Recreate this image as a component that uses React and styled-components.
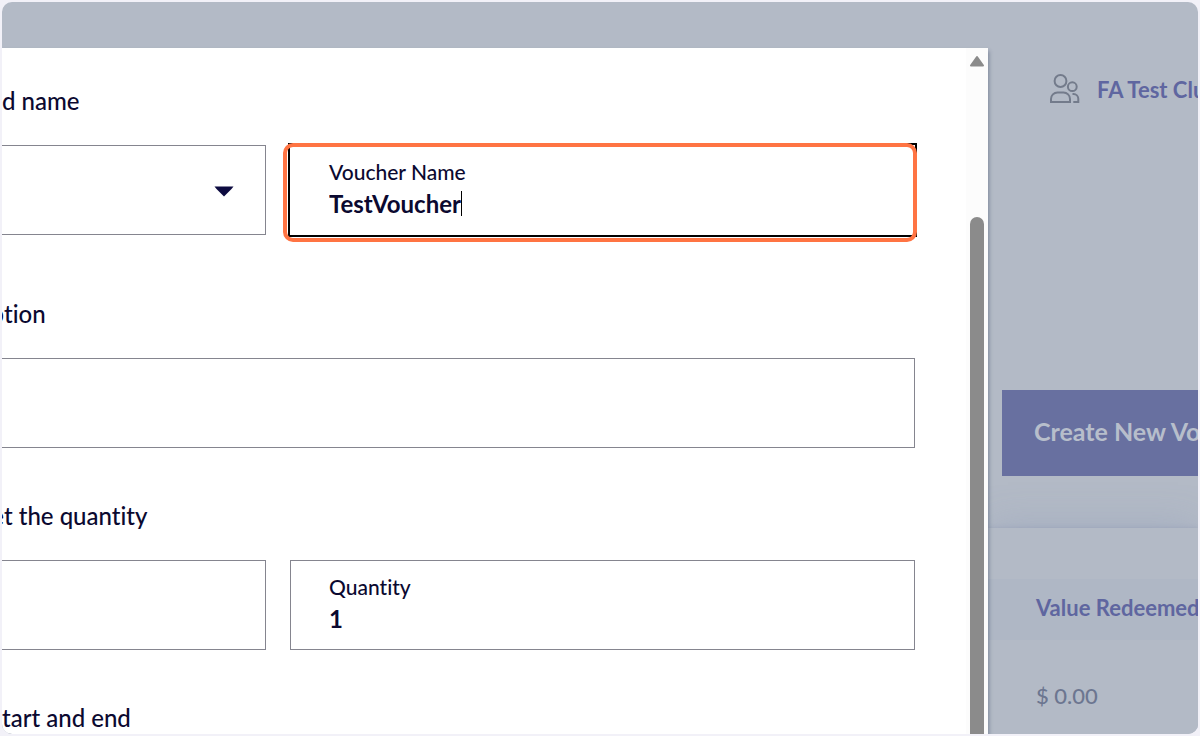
import React from 'react';
import styled, { createGlobalStyle } from 'styled-components';

const App = () => {
  return (
    <>
      <GlobalStyle />
      <Frame>
        <Body>
          <Dialog>
            <Form>
              <Heading>d name</Heading>
              <FieldRow $after={65}>
                <SideField>
                  <Select aria-label="Voucher type" defaultValue="">
                    <option value=""></option>
                  </Select>
                  <Arrow width="20" height="11" viewBox="0 0 20 11">
                    <path d="M0.5 0.5h19L17.5 3 10 10.5 2.500 3z" fill="#0d0b40" />
                  </Arrow>
                </SideField>
                <Field $focused>
                  <Label htmlFor="name">Voucher Name</Label>
                  <ValueRow>
                    <NameInput id="name" defaultValue="TestVoucher" />
                    <Caret />
                  </ValueRow>
                  <Highlight />
                </Field>
              </FieldRow>

              <Heading>
                <Cut>p</Cut>tion
              </Heading>
              <FieldRow $after={54}>
                <PlainInput aria-label="Description" />
              </FieldRow>

              <Heading>
                <Cut>e</Cut>t the quantity
              </Heading>
              <FieldRow $after={54}>
                <SideField>
                  <BareInput aria-label="Value" />
                </SideField>
                <Field>
                  <Label htmlFor="quantity">Quantity</Label>
                  <ValueInput id="quantity" defaultValue="1" />
                </Field>
              </FieldRow>

              <Heading>tart and end</Heading>
            </Form>
            <Scrollbar>
              <svg width="16" height="12" viewBox="0 0 16 12">
                <path
                  d="M8 2 14 10.500H2z"
                  fill="#8b8b8b"
                  stroke="#8b8b8b"
                  strokeWidth="2"
                  strokeLinejoin="round"
                />
              </svg>
              <Thumb />
            </Scrollbar>
          </Dialog>

          <Page>
            <Account>
              <PeopleIcon />
              FA Test Club
            </Account>
            <CreateButton>Create New Voucher</CreateButton>
            <Card>
              <Table>
                <thead>
                  <tr>
                    <Th>Value Redeemed</Th>
                  </tr>
                </thead>
                <tbody>
                  <tr>
                    <Td>$ 0.00</Td>
                  </tr>
                </tbody>
              </Table>
            </Card>
          </Page>
        </Body>
      </Frame>
    </>
  );
};

const PeopleIcon = () => (
  <svg width="30" height="30" viewBox="0 0 30 30" fill="none" stroke="#737b8b" strokeWidth="2">
    <circle cx="10.500" cy="7" r="5.900" />
    <circle cx="22.300" cy="12.700" r="4.400" />
    <path d="M1 28v-3a6.500 6.500 0 0 1 6.500-6.500h6a6.500 6.500 0 0 1 6.500 6.500v3z" />
    <path d="M22.500 20h1a4.800 4.800 0 0 1 4.800 4.800V28h-5" />
  </svg>
);

export default App;

// styles

const GlobalStyle = createGlobalStyle`
  * {
    box-sizing: border-box;
  }
  body {
    margin: 0;
    background: #f2f1f8;
    font-family: Lato, 'Liberation Sans', sans-serif;
    font-variant-ligatures: none;
  }
  input, select, button {
    font-family: inherit;
    border-radius: 0;
  }
`;

const Frame = styled.div`
  height: 100vh;
  padding-top: 46px;
  border: 2px solid #f2f1f8;
  border-radius: 12px;
  background: #b3bac6;
  overflow: hidden;
`;

const Body = styled.div`
  display: flex;
  height: 100%;
`;

const Dialog = styled.main`
  flex: 1;
  display: flex;
  min-width: 0;
  background: #fff;
  box-shadow: 1px 3px 4px rgba(40, 55, 85, 0.4);
  z-index: 1;
`;

const Form = styled.form`
  flex: 1;
  padding: 39px 51px 0 0;
  color: #0b0930;
  overflow: hidden;
`;

const Heading = styled.h2`
  display: flex;
  margin: 0 0 30px;
  font-size: 24px;
  line-height: 28px;
  font-weight: 500;
  white-space: pre;
`;

// trailing edge of a letter that has scrolled out of view
const Cut = styled.span`
  display: flex;
  justify-content: flex-end;
  width: 2px;
  overflow: hidden;
`;

const FieldRow = styled.div`
  display: flex;
  gap: 24px;
  margin-bottom: ${(props) => props.$after}px;
`;

const SideField = styled.div`
  position: relative;
  width: 264px;
  height: 90px;
  border: 1px solid #85858f;
  border-left: 0;
`;

const Field = styled.div`
  position: relative;
  flex: 1;
  height: 90px;
  padding: 13px 38px 0;
  border: 1px solid ${(props) => (props.$focused ? 'transparent' : '#85858f')};
  outline: ${(props) => (props.$focused ? '2px solid #000' : 'none')};
`;

const Highlight = styled.span`
  position: absolute;
  inset: -3px -3px -8px -8px;
  border: 4px solid #ff7443;
  border-radius: 10px;
  pointer-events: none;
`;

const Label = styled.label`
  display: block;
  font-size: 21px;
  line-height: 26px;
  font-weight: 500;
`;

const ValueRow = styled.div`
  display: flex;
  align-items: center;
`;

const BareInput = styled.input`
  width: 100%;
  height: 100%;
  padding: 0 38px;
  border: 0;
  outline: 0;
  background: transparent;
  color: inherit;
  font-size: 24px;
`;

const ValueInput = styled(BareInput)`
  height: 36px;
  padding: 0;
  font-weight: 700;
`;

const NameInput = styled(ValueInput)`
  width: auto;
  field-sizing: content;
  caret-color: transparent;
`;

const Caret = styled.span`
  width: 1px;
  height: 25px;
  background: #000;
`;

const PlainInput = styled(BareInput)`
  height: 90px;
  border: 1px solid #85858f;
  border-left: 0;
`;

const Select = styled.select`
  width: 100%;
  height: 100%;
  padding: 0 60px 0 38px;
  border: 0;
  background: transparent;
  appearance: none;
  font-size: 24px;
`;

const Arrow = styled.svg`
  position: absolute;
  top: 40px;
  right: 31px;
  pointer-events: none;
`;

const Scrollbar = styled.div`
  display: flex;
  flex-direction: column;
  align-items: center;
  gap: 150px;
  width: 22px;
  padding-top: 7px;
  background: #fcfcfc;
`;

const Thumb = styled.div`
  flex: 1;
  width: 14px;
  border-radius: 7px 7px 0 0;
  background: #8b8b8b;
`;

const Page = styled.aside`
  width: 210px;
  padding-top: 20px;
  overflow: hidden;
  white-space: nowrap;
`;

const Account = styled.div`
  display: flex;
  align-items: center;
  gap: 17px;
  height: 42px;
  padding-left: 62px;
  color: #5f66a0;
  font-size: 22px;
  font-weight: 700;
  svg {
    flex: none;
  }
`;

const CreateButton = styled.button`
  display: block;
  height: 86px;
  margin: 280px 0 0 14px;
  padding: 0 32px 4px;
  border: 0;
  background: #6870a0;
  color: #b7becb;
  font-size: 25px;
  font-weight: 700;
`;

const Card = styled.section`
  margin-top: 52px;
  padding-top: 51px;
  background: #b3bac6;
  box-shadow: 0 0 40px rgba(120, 140, 180, 0.3), 0 0 4px rgba(120, 130, 160, 0.3);
`;

const Table = styled.table`
  width: 100%;
  border-collapse: collapse;
  text-align: left;
`;

const Th = styled.th`
  height: 61px;
  padding: 0 48px 4px;
  background: #afb7c5;
  color: #5f66a0;
  font-size: 22px;
  font-weight: 700;
`;

const Td = styled.td`
  height: 112px;
  padding: 0 48px 2px;
  color: #6c7690;
  font-size: 22px;
  font-weight: 500;
`;
